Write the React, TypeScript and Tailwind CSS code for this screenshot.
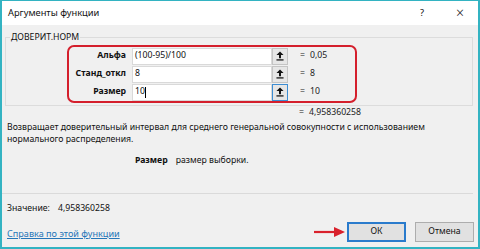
import {ReactNode} from "react";

const font = {fontFamily: '"Noto Sans", "Open Sans", sans-serif'};

const PickIcon = () => (
    <svg width="8" height="10" viewBox="0 0 9 11">
        <path d="M4.5 0.5 L8.5 4.5 L5.6 4.5 L5.6 8 L3.4 8 L3.4 4.5 L0.5 4.5 Z" fill="#111"/>
        <rect x="0.5" y="9.2" width="8" height="1.4" fill="#111"/>
    </svg>
);

const ArgRow = ({
                    label,
                    value,
                    result,
                    focused,
                }: {
    label: string;
    value: ReactNode;
    result: string;
    focused?: boolean;
}) => (
    <div className="flex flex-row items-center h-[18px]">
        <div className="w-[57px] text-right font-bold text-[8.7px] text-[#111] whitespace-nowrap">{label}</div>
        <div className="ml-[6px] w-[140px] h-[17px] bg-white border border-[#d9d9d9] flex items-center pl-[2px] text-[8.7px] text-[#111]">
            {value}
        </div>
        <div
            className={`w-[16px] h-[17px] bg-[#e6e6e6] flex items-center justify-center border ${focused ? "border-[#3c8dd3]" : "border-[#c4c4c4]"}`}
        >
            <PickIcon/>
        </div>
        <div className="ml-[12px] text-[8.7px] text-[#222]">=</div>
        <div className="ml-[5px] text-[8.7px] text-[#222]">{result}</div>
    </div>
);

const App = () => {
    return (
        <div
            className="w-[480px] h-[249px] bg-[#f0f0f0] border-x-2 border-b-2 border-t border-[#33b3c2] flex flex-col overflow-hidden"
            style={font}
        >
            <div className="h-[24px] bg-white flex flex-row items-center pl-[6px] pr-[14px] text-[9.3px] text-[#111]">
                <span>Аргументы функции</span>
                <span className="ml-auto">?</span>
                <span className="ml-[32px] text-[14px] leading-none font-light">×</span>
            </div>

            <fieldset className="ml-[3px] mr-[5px] mt-[5px] border border-[#dcdcdc] h-[76px]">
                <legend className="ml-[4px] px-[1px] text-[8.7px] leading-[14px] text-[#111]">ДОВЕРИТ.НОРМ</legend>
                <div className="ml-[61px] mt-[1px] w-[290px] h-[58px] border-2 border-[#d41f2c] rounded-[7px] flex flex-col">
                    <ArgRow label="Альфа" value="(100-95)/100" result="0,05"/>
                    <ArgRow label="Станд_откл" value="8" result="8"/>
                    <ArgRow
                        label="Размер"
                        value={<>10<span className="inline-block w-px h-[11px] bg-black"/></>}
                        result="10"
                        focused
                    />
                </div>
            </fieldset>

            <div className="flex flex-row h-[14px] items-center text-[8.7px] text-[#222]">
                <span className="ml-[297px]">=</span>
                <span className="ml-[5px]">4,958360258</span>
            </div>

            <div className="mt-px pl-[5px] pr-[20px] text-[8.7px] leading-[12px] text-[#111]">
                Возвращает доверительный интервал для среднего генеральной совокупности с использованием
                нормального распределения.
            </div>

            <div className="flex flex-row h-[14px] items-center text-[8.7px] text-[#111] mt-[9px]">
                <span className="ml-[133px] font-bold">Размер</span>
                <span className="ml-[8px]">размер выборки.</span>
            </div>

            <div className="mt-[25px] mr-[5px] border-t border-[#dadada]"/>

            <div className="flex flex-row h-[14px] items-center text-[8.7px] text-[#111] mt-[8px]">
                <span className="ml-[5px]">Значение:</span>
                <span className="ml-[8px]">4,958360258</span>
            </div>

            <div className="flex flex-row items-center mt-[6px] h-[20px] pr-[4px]">
                <a href="#" className="ml-[5px] mt-[3px] text-[9.1px] text-[#2676b8] underline">Справка по этой функции</a>
                <svg className="ml-auto" width="32" height="12" viewBox="0 0 32 12">
                    <line x1="0" y1="6" x2="24" y2="6" stroke="#d9212c" strokeWidth="2.2"/>
                    <path d="M20 1 L31 6 L20 11 Z" fill="#d9212c"/>
                </svg>
                <button
                    className="ml-[1px] w-[59px] h-[20px] bg-[#e1e1e1] border-2 border-[#2a7bcc] text-[8.7px] text-[#111]">
                    ОК
                </button>
                <button
                    className="ml-[9px] w-[59px] h-[20px] bg-[#e1e1e1] border border-[#adadad] text-[8.7px] text-[#111]">
                    Отмена
                </button>
            </div>
        </div>
    );
};

export default App;
